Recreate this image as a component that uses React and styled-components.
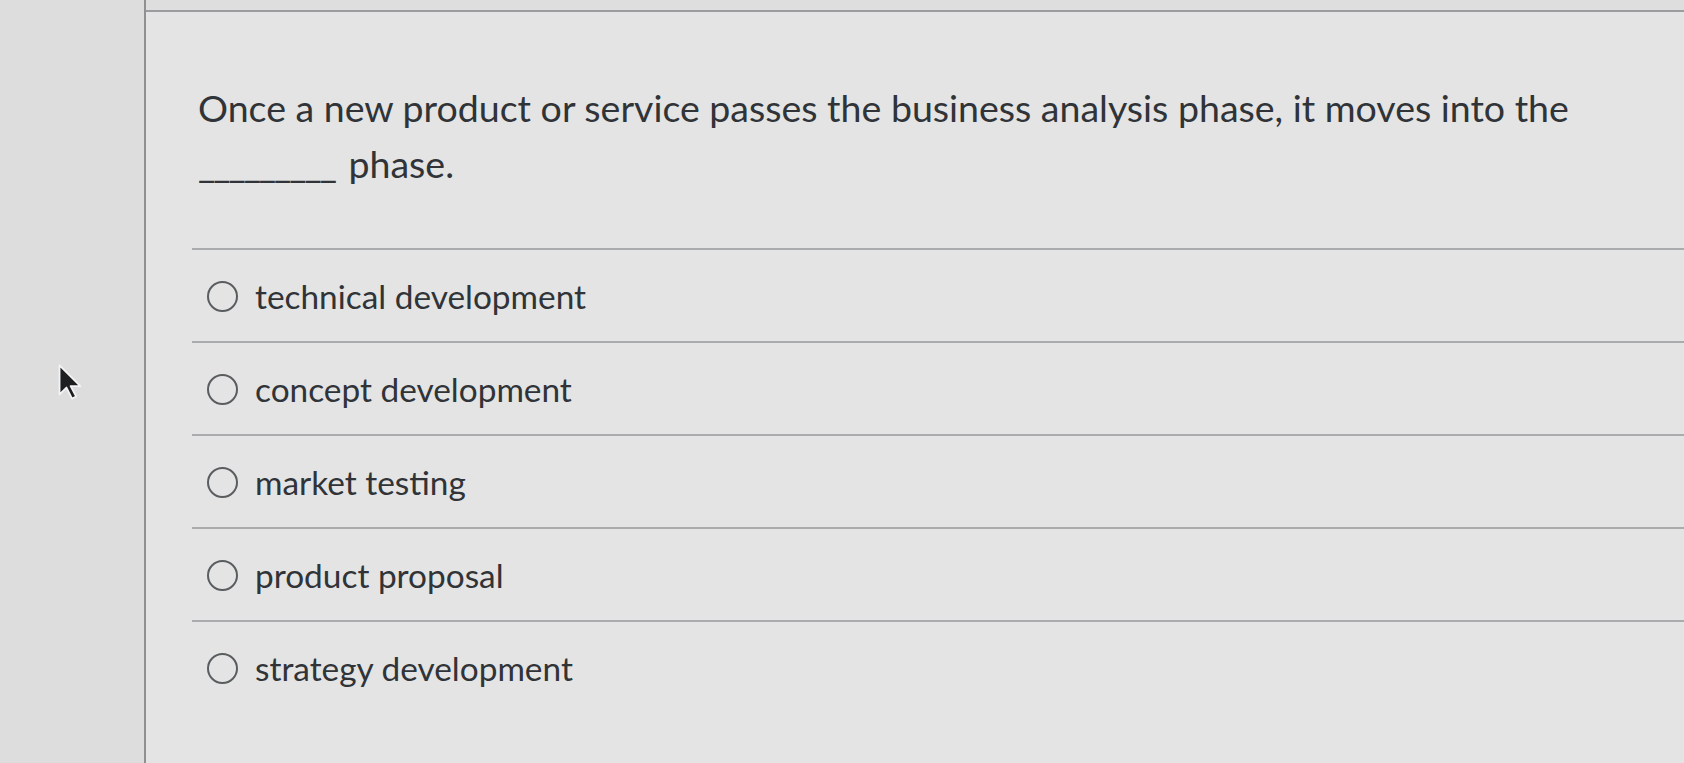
import React from 'react';
import styled, { createGlobalStyle } from 'styled-components';

const GlobalStyle = createGlobalStyle`
  html, body {
    margin: 0;
    padding: 0;
    background: #dddedd;
    overflow: hidden;
  }
  body {
    font-family: Lato, "Open Sans", sans-serif;
    color: #303337;
  }
`;

const Page = styled.div`
  display: flex;
  height: 763px;
  width: 1684px;
`;

const Sidebar = styled.div`
  position: relative;
  width: 144px;
  flex-shrink: 0;
  background: #dcdddc;
  border-right: 2px solid #8e9092;
`;

const Cursor = styled.svg`
  position: absolute;
  left: 54px;
  top: 360px;
`;

const Main = styled.main`
  flex: 1;
  margin-top: 10px;
  border-top: 2px solid #9a9c9d;
  background: #e3e4e3;
  padding: 68px 0 0 46px;
`;

const Question = styled.p`
  margin: 0 0 56px 6px;
  font-size: 37.5px;
  line-height: 56px;
  font-weight: 400;
`;

const Blank = styled.span`
  letter-spacing: -2px;
  margin-right: 4px;
`;

const Options = styled.ul`
  list-style: none;
  margin: 0;
  padding: 0;
`;

const Option = styled.li`
  display: flex;
  align-items: center;
  gap: 17px;
  height: 93px;
  padding-left: 15px;
  border-top: 2px solid #a9abac;
  font-size: 33.4px;
  box-sizing: border-box;
`;

const Radio = styled.span`
  width: 27px;
  height: 27px;
  border-radius: 50%;
  border: 2px solid #5a5d5f;
  flex-shrink: 0;
  margin-top: 2px;
`;

const choices = [
  'technical development',
  'concept development',
  'market testing',
  'product proposal',
  'strategy development',
];

export default function App() {
  return (
    <>
      <GlobalStyle />
      <Page>
        <Sidebar>
          <Cursor width="36" height="44" viewBox="0 0 26 30">
            <path
              d="M4 3 L4 24 L9 19 L13 27 L16 25.5 L12 18 L19 18 Z"
              fill="#1d1f21"
              stroke="#f4f4f4"
              strokeWidth="1.3"
              strokeLinejoin="round"
            />
          </Cursor>
        </Sidebar>
        <Main>
          <Question>
            Once a new product or service passes the business analysis phase, it moves into the
            <br />
            <Blank>_________</Blank> phase.
          </Question>
          <Options>
            {choices.map((c) => (
              <Option key={c}>
                <Radio />
                {c}
              </Option>
            ))}
          </Options>
        </Main>
      </Page>
    </>
  );
}
